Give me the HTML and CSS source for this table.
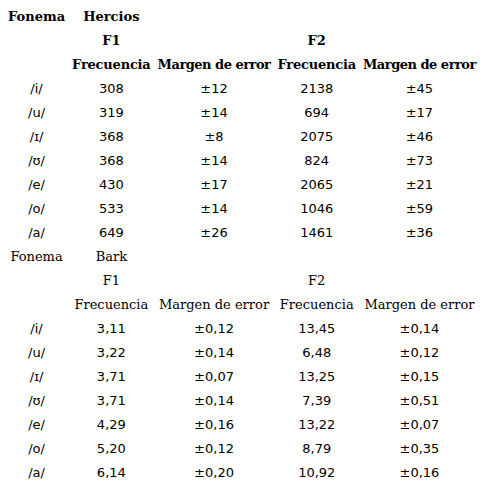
FILE: index.html
```html
<!DOCTYPE html>
<html lang="es">
<head>
<meta charset="utf-8">
<link rel="stylesheet" href="styles.css">
</head>
<body>
<table class="formants">
  <tr class="hz"><th>Fonema</th><th>Hercios</th><td></td><td></td><td></td></tr>
  <tr class="hz"><td></td><th>F1</th><td></td><th>F2</th><td></td></tr>
  <tr class="hz"><td></td><th class="freq">Frecuencia</th><th class="err">Margen de error</th><th class="freq">Frecuencia</th><th class="err">Margen de error</th></tr>
  <tr><td>/i/</td><td>308</td><td>±12</td><td>2138</td><td>±45</td></tr>
  <tr><td>/u/</td><td>319</td><td>±14</td><td>694</td><td>±17</td></tr>
  <tr><td>/ɪ/</td><td>368</td><td>±8</td><td>2075</td><td>±46</td></tr>
  <tr><td>/ʊ/</td><td>368</td><td>±14</td><td>824</td><td>±73</td></tr>
  <tr><td>/e/</td><td>430</td><td>±17</td><td>2065</td><td>±21</td></tr>
  <tr><td>/o/</td><td>533</td><td>±14</td><td>1046</td><td>±59</td></tr>
  <tr><td>/a/</td><td>649</td><td>±26</td><td>1461</td><td>±36</td></tr>
  <tr class="bk"><th>Fonema</th><th>Bark</th><td></td><td></td><td></td></tr>
  <tr class="bk"><td></td><th>F1</th><td></td><th>F2</th><td></td></tr>
  <tr class="bk"><td></td><th class="freq">Frecuencia</th><th class="err">Margen de error</th><th class="freq">Frecuencia</th><th class="err">Margen de error</th></tr>
  <tr><td>/i/</td><td>3,11</td><td>±0,12</td><td>13,45</td><td>±0,14</td></tr>
  <tr><td>/u/</td><td>3,22</td><td>±0,14</td><td>6,48</td><td>±0,12</td></tr>
  <tr><td>/ɪ/</td><td>3,71</td><td>±0,07</td><td>13,25</td><td>±0,15</td></tr>
  <tr><td>/ʊ/</td><td>3,71</td><td>±0,14</td><td>7,39</td><td>±0,51</td></tr>
  <tr><td>/e/</td><td>4,29</td><td>±0,16</td><td>13,22</td><td>±0,07</td></tr>
  <tr><td>/o/</td><td>5,20</td><td>±0,12</td><td>8,79</td><td>±0,35</td></tr>
  <tr><td>/a/</td><td>6,14</td><td>±0,20</td><td>10,92</td><td>±0,16</td></tr>
</table>
</body>
</html>
```

FILE: styles.css
```css
html, body {
  margin: 0;
  padding: 0;
  background: #ffffff;
}
body {
  padding: 5px 0 0 4px;
}
.formants {
  border-collapse: separate;
  border-spacing: 1px 0;
  font-family: "DejaVu Sans", sans-serif;
  font-size: 13px;
  color: #000000;
}
.formants td,
.formants th {
  padding: 0 3px;
  height: 24px;
  line-height: 24px;
  text-align: center;
  vertical-align: middle;
  white-space: nowrap;
}
.formants th {
  font-family: "DejaVu Serif", serif;
}
.hz th {
  font-weight: bold;
}
.hz .freq {
  letter-spacing: -0.2px;
}
.hz .err {
  letter-spacing: -0.5px;
}
.bk th {
  font-weight: normal;
}
```
